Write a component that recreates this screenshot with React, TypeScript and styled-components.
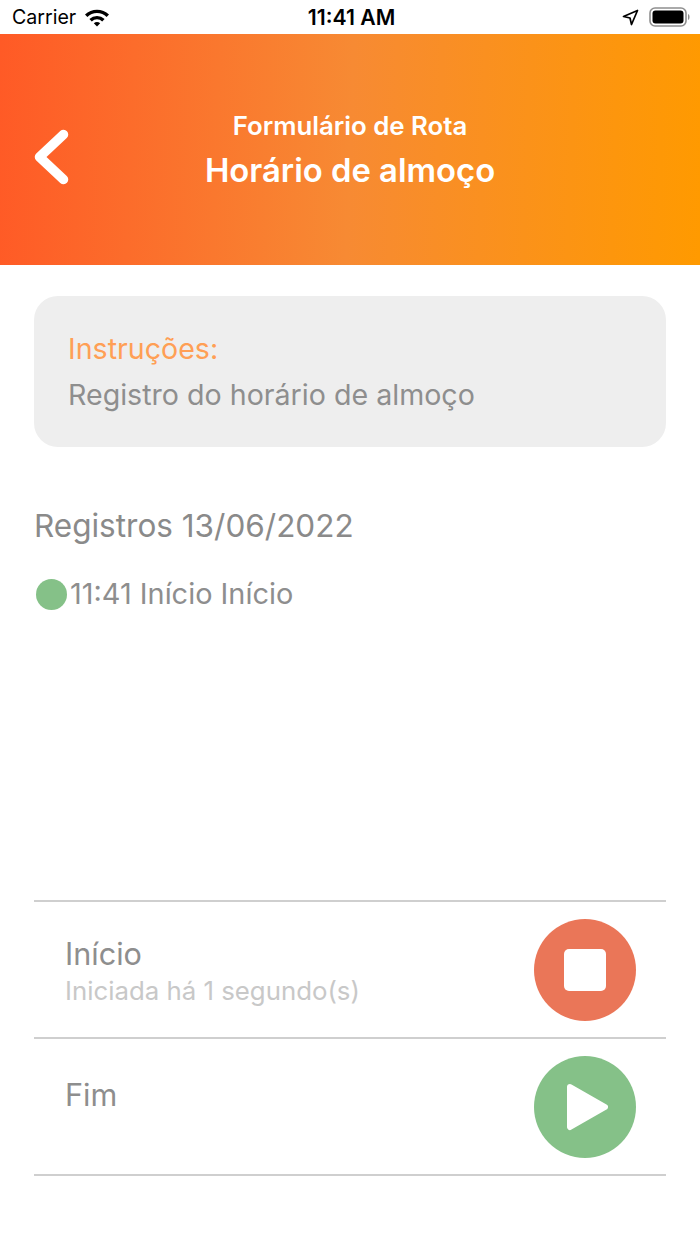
import { createGlobalStyle } from "styled-components";
import styled from "styled-components";

const Global = createGlobalStyle`
  html, body { margin: 0; padding: 0; background: #fff; }
  body { font-family: Inter, "Liberation Sans", sans-serif; }
`;

const Screen = styled.div`
  width: 700px;
  height: 1244px;
  display: flex;
  flex-direction: column;
  overflow: hidden;
  background: #fff;
`;

const StatusBar = styled.div`
  height: 34px;
  padding: 0 9px 0 12px;
  display: grid;
  grid-template-columns: 1fr auto 1fr;
  align-items: center;
  color: #000;
`;

const StatusLeft = styled.div`
  display: flex;
  align-items: center;
  gap: 8px;
  font-size: 19.6px;
`;

const Clock = styled.div`
  font-size: 21.2px;
  font-weight: 600;
`;

const StatusRight = styled.div`
  display: flex;
  align-items: center;
  justify-content: flex-end;
  gap: 10px;
`;

const Header = styled.header`
  height: 231px;
  box-sizing: border-box;
  padding: 0 34px;
  display: flex;
  align-items: center;
  position: relative;
  justify-content: center;
  color: #fff;
  background: linear-gradient(92deg, #ff5a26 0%, #f78a33 50%, #ff9a00 100%);
`;

const BackIcon = styled.svg`
  position: absolute;
  left: 33px;
  top: 95px;
`;

const Titles = styled.div`
  display: flex;
  flex-direction: column;
  align-items: center;
  gap: 12px;
`;

const Subtitle = styled.div`
  font-size: 25.8px;
  font-weight: 600;
  line-height: 28px;
`;

const Title = styled.div`
  font-size: 32.8px;
  font-weight: 600;
  line-height: 36px;
`;

const Body = styled.main`
  flex: 1;
  padding: 31px 34px 0;
  display: flex;
  flex-direction: column;
`;

const InfoCard = styled.section`
  height: 151px;
  box-sizing: border-box;
  padding: 35px 34px 0;
  background: #eeeeee;
  border-radius: 24px;
  display: flex;
  flex-direction: column;
  gap: 10px;
  font-size: 28.6px;
  line-height: 36px;
`;

const InfoLabel = styled.div`
  color: #ff9f55;
`;

const InfoText = styled.div`
  color: #8e8e8e;
`;

const LogHeading = styled.h2`
  margin: 58px 0 0;
  font-size: 31.5px;
  line-height: 42px;
  font-weight: 400;
  color: #8a8a8a;
`;

const LogRow = styled.div`
  margin-top: 29px;
  display: flex;
  align-items: center;
  gap: 3px;
  font-size: 28.9px;
  line-height: 36px;
  color: #8e8e8e;
`;

const Dot = styled.span`
  width: 31px;
  height: 31px;
  margin-left: 2px;
  border-radius: 50%;
  background: #85c188;
`;

const Actions = styled.div`
  margin-top: 288px;
  border-top: 2px solid #cfcfcf;
`;

const ActionRow = styled.div`
  height: 135px;
  padding: 0 30px 0 31px;
  display: flex;
  justify-content: space-between;
  align-items: flex-start;
  border-bottom: 2px solid #cfcfcf;
`;

const ActionText = styled.div<{ $alone?: boolean }>`
  padding-top: ${(p) => (p.$alone ? "37px" : "33px")};
  display: flex;
  flex-direction: column;
`;

const ActionName = styled.div`
  font-size: 30.6px;
  line-height: 38px;
  color: #8e8e8e;
`;

const ActionHint = styled.div`
  margin-top: 3px;
  font-size: 25.8px;
  line-height: 30px;
  color: #c8c8c8;
`;

const RoundButton = styled.button<{ $tone: string }>`
  width: 102px;
  height: 102px;
  margin-top: 17px;
  padding: 0;
  border: none;
  border-radius: 50%;
  display: flex;
  align-items: center;
  justify-content: center;
  background: ${(p) => p.$tone};
`;

const StopSquare = styled.span`
  width: 42px;
  height: 42px;
  border-radius: 5px;
  background: #fff;
`;

export default function App() {
  return (
    <Screen>
      <Global />
      <StatusBar>
        <StatusLeft>
          <span>Carrier</span>
          <svg width="26" height="19" viewBox="0 0 26 19">
            <path d="M1 6.6 A17 17 0 0 1 25 6.6 L22.6 9 A13.6 13.6 0 0 0 3.4 9 Z" fill="#000" />
            <path d="M5.4 11 A11 11 0 0 1 20.6 11 L18.2 13.4 A7.6 7.6 0 0 0 7.8 13.4 Z" fill="#000" />
            <path d="M9.8 15.3 A5 5 0 0 1 16.2 15.3 L13 18.6 Z" fill="#000" />
          </svg>
        </StatusLeft>
        <Clock>11:41 AM</Clock>
        <StatusRight>
          <svg width="17" height="17" viewBox="0 0 17 17">
            <path d="M15.5 1.5 L9.5 15.5 L8 9 L1.5 7.5 Z" fill="none" stroke="#000" strokeWidth="1.7" strokeLinejoin="round" />
          </svg>
          <svg width="42" height="20" viewBox="0 0 42 20">
            <rect x="1" y="1" width="36" height="18" rx="5" fill="none" stroke="#8f8f8f" strokeWidth="1.6" />
            <rect x="3.5" y="3.5" width="31" height="13" rx="3" fill="#000" />
            <path d="M39 7 C41 7.6 41 12.4 39 13 Z" fill="#8f8f8f" />
          </svg>
        </StatusRight>
      </StatusBar>
      <Header>
        <BackIcon width="36" height="56" viewBox="0 0 36 56">
          <path d="M30.5 5.5 L6.5 28 L30.5 50.5" fill="none" stroke="#fff" strokeWidth="9.5" strokeLinecap="round" strokeLinejoin="round" />
        </BackIcon>
        <Titles>
          <Subtitle>Formulário de Rota</Subtitle>
          <Title>Horário de almoço</Title>
        </Titles>
      </Header>
      <Body>
        <InfoCard>
          <InfoLabel>Instruções:</InfoLabel>
          <InfoText>Registro do horário de almoço</InfoText>
        </InfoCard>
        <LogHeading>Registros 13/06/2022</LogHeading>
        <LogRow>
          <Dot />
          <span>11:41 Início Início</span>
        </LogRow>
        <Actions>
          <ActionRow>
            <ActionText>
              <ActionName>Início</ActionName>
              <ActionHint>Iniciada há 1 segundo(s)</ActionHint>
            </ActionText>
            <RoundButton $tone="#ea7658">
              <StopSquare />
            </RoundButton>
          </ActionRow>
          <ActionRow>
            <ActionText $alone>
              <ActionName>Fim</ActionName>
            </ActionText>
            <RoundButton $tone="#85c188">
              <svg width="46" height="50" viewBox="0 0 46 50">
                <path d="M8 5 L43 25 L8 45 Z" fill="#fff" stroke="#fff" strokeWidth="6" strokeLinejoin="round" />
              </svg>
            </RoundButton>
          </ActionRow>
        </Actions>
      </Body>
    </Screen>
  );
}
